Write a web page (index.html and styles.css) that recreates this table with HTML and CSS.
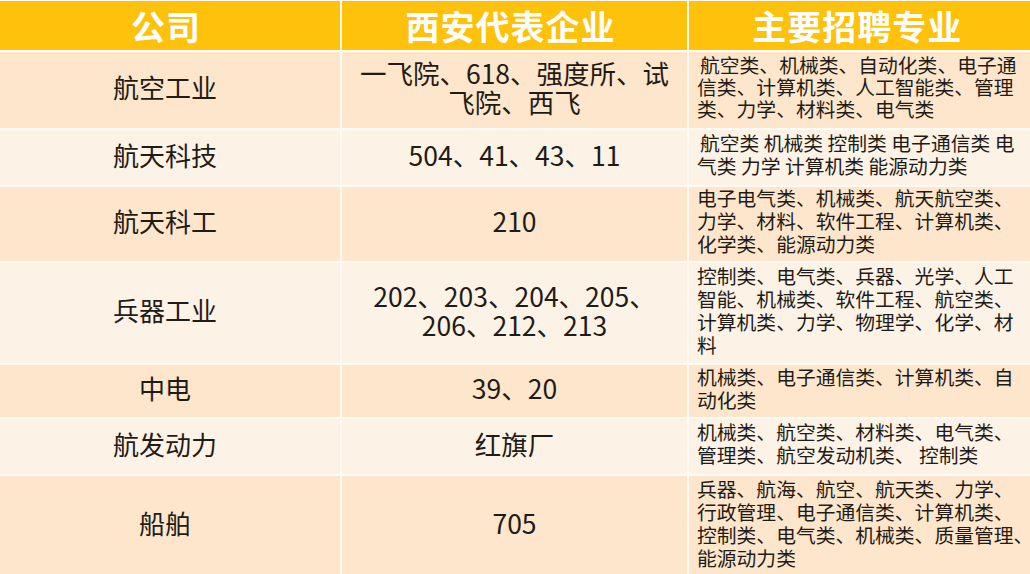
FILE: index.html
```html
<!DOCTYPE html>
<html lang="zh">
<head>
<meta charset="utf-8">
<link rel="stylesheet" href="styles.css">
</head>
<body>
<div class="table">
  <div class="cell head">公司</div>
  <div class="cell head">西安代表企业</div>
  <div class="cell head">主要招聘专业</div>

  <div class="cell name odd">航空工业</div>
  <div class="cell firm odd">一飞院、618、强度所、试<br>飞院、西飞</div>
  <div class="cell major odd tight"><p class="indent">航空类、机械类、自动化类、电子通<br>信类、计算机类、人工智能类、管理<br>类、力学、材料类、电气类</p></div>

  <div class="cell name even">航天科技</div>
  <div class="cell firm even">504、41、43、11</div>
  <div class="cell major even"><p class="indent">航空类 机械类 控制类 电子通信类 电<br>气类 力学 计算机类 能源动力类</p></div>

  <div class="cell name odd">航天科工</div>
  <div class="cell firm odd">210</div>
  <div class="cell major odd"><p>电子电气类、机械类、航天航空类、<br>力学、材料、软件工程、计算机类、<br>化学类、能源动力类</p></div>

  <div class="cell name even">兵器工业</div>
  <div class="cell firm even">202、203、204、205、<br>206、212、213</div>
  <div class="cell major even"><p>控制类、电气类、兵器、光学、人工<br>智能、机械类、软件工程、航空类、<br>计算机类、力学、物理学、化学、材<br>料</p></div>

  <div class="cell name odd">中电</div>
  <div class="cell firm odd">39、20</div>
  <div class="cell major odd"><p>机械类、电子通信类、计算机类、自<br>动化类</p></div>

  <div class="cell name even">航发动力</div>
  <div class="cell firm even">红旗厂</div>
  <div class="cell major even"><p>机械类、航空类、材料类、电气类、<br>管理类、航空发动机类、 控制类</p></div>

  <div class="cell name odd">船舶</div>
  <div class="cell firm odd">705</div>
  <div class="cell major odd"><p>兵器、航海、航空、航天类、力学、<br>行政管理、电子通信类、计算机类、<br>控制类、电气类、机械类、质量管理、<br>能源动力类</p></div>
</div>
</body>
</html>
```
FILE: styles.css
```css
html, body {
  margin: 0;
  padding: 0;
  background: #ffffff;
}
body {
  width: 1030px;
  height: 574px;
  overflow: hidden;
  font-family: "Noto Sans CJK SC", "Noto Sans", sans-serif;
  color: #1f1b17;
}
.table {
  display: grid;
  grid-template-columns: 340px 345px 1fr;
  grid-template-rows: 49px 76px 55px 74px 100px 52px 55px 100px;
  gap: 2px;
  padding-top: 1px;
  background: #fffaf4;
}
.cell {
  display: flex;
  align-items: center;
  padding-bottom: 7px;
}
.cell p {
  margin: 0;
}
.head {
  background: #fec10c;
  color: #ffffff;
  font-weight: 700;
  font-size: 34px;
  justify-content: center;
  letter-spacing: 1px;
  padding-bottom: 0;
  padding-right: 8px;
}
.odd { background: #fde6cc; }
.even { background: #fdf2e6; }
.name {
  justify-content: center;
  font-size: 26px;
  padding-right: 10px;
}
.firm {
  justify-content: center;
  text-align: center;
  font-size: 26.5px;
  line-height: 29px;
}
.major {
  font-size: 19.8px;
  line-height: 23px;
  padding-left: 8px;
  white-space: nowrap;
}
.tight {
  line-height: 22px;
}
.indent {
  text-indent: 3px;
}
```
